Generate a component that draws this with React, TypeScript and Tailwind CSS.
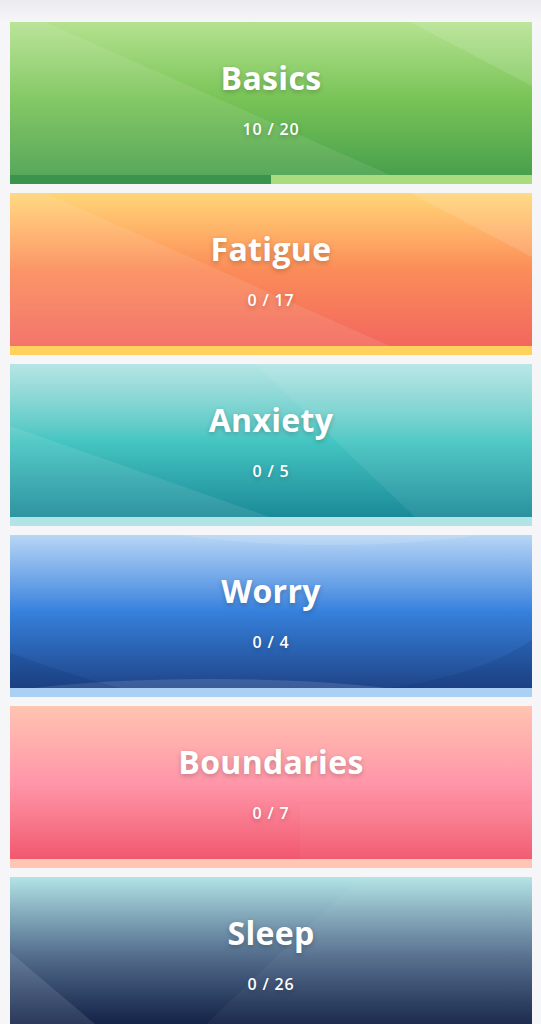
import React from 'react';

type Topic = {
  title: string;
  done: number;
  total: number;
  bg: string;
  track: string;
  fill: string;
  overlay: React.ReactNode;
};

const TOPICS: Topic[] = [
  {
    title: 'Basics',
    done: 10,
    total: 20,
    bg: 'bg-gradient-to-b from-[#b4e28f] via-[#79c457] to-[#48a04c]',
    track: 'bg-[#a9db7f]',
    fill: 'bg-[#3a944c]',
    overlay: (
      <>
        <polygon points="0,0 35,0 380,153 0,153" fill="#ffffff" fillOpacity="0.09" />
        <polygon points="400,0 522,0 522,64" fill="#ffffff" fillOpacity="0.12" />
      </>
    ),
  },
  {
    title: 'Fatigue',
    done: 0,
    total: 17,
    bg: 'bg-gradient-to-b from-[#ffd677] via-[#fb8c59] to-[#f2675e]',
    track: 'bg-[#ffd25f]',
    fill: 'bg-[#f2675e]',
    overlay: (
      <>
        <polygon points="0,0 35,0 380,153 0,153" fill="#ffffff" fillOpacity="0.09" />
        <polygon points="400,0 522,0 522,64" fill="#ffffff" fillOpacity="0.12" />
      </>
    ),
  },
  {
    title: 'Anxiety',
    done: 0,
    total: 5,
    bg: 'bg-gradient-to-b from-[#b5e5e5] via-[#45c6c2] to-[#1a8a98]',
    track: 'bg-[#b2e4e6]',
    fill: 'bg-[#1a8a98]',
    overlay: (
      <>
        <polygon points="0,62 260,153 0,153" fill="#ffffff" fillOpacity="0.09" />
        <polygon points="245,0 522,0 522,153 405,153" fill="#ffffff" fillOpacity="0.07" />
      </>
    ),
  },
  {
    title: 'Worry',
    done: 0,
    total: 4,
    bg: 'bg-gradient-to-b from-[#b8d6f5] via-[#3681dd] to-[#1f4589]',
    track: 'bg-[#acd0f3]',
    fill: 'bg-[#1f4589]',
    overlay: (
      <>
        <ellipse cx="320" cy="-32" rx="230" ry="42" fill="#ffffff" fillOpacity="0.12" />
        <ellipse cx="200" cy="178" rx="260" ry="34" fill="#ffffff" fillOpacity="0.13" />
        <path d="M0,118 Q60,140 110,153 L0,153 Z" fill="#0b2a66" fillOpacity="0.18" />
        <path d="M522,105 Q470,140 380,153 L522,153 Z" fill="#0b2a66" fillOpacity="0.15" />
      </>
    ),
  },
  {
    title: 'Boundaries',
    done: 0,
    total: 7,
    bg: 'bg-gradient-to-b from-[#ffc4b1] via-[#ff96a9] to-[#f1576f]',
    track: 'bg-[#ffc6b6]',
    fill: 'bg-[#f1576f]',
    overlay: <rect x="290" y="99" width="232" height="54" fill="#ffffff" fillOpacity="0.03" />,
  },
  {
    title: 'Sleep',
    done: 0,
    total: 26,
    bg: 'bg-gradient-to-b from-[#b2e4e6] via-[#56708f] to-[#101d42]',
    track: 'bg-[#b2e4e6]',
    fill: 'bg-[#101d42]',
    overlay: (
      <>
        <polygon points="350,0 522,0 522,153 190,153" fill="#ffffff" fillOpacity="0.04" />
        <polygon points="0,75 92,153 0,153" fill="#ffffff" fillOpacity="0.1" />
      </>
    ),
  },
];

function TopicCard({ topic }: { topic: Topic }) {
  const pct = (topic.done / topic.total) * 100;
  return (
    <div className="w-[522px]">
      <div className={`relative h-[153px] overflow-hidden ${topic.bg}`}>
        <svg className="absolute inset-0 w-full h-full" viewBox="0 0 522 153" preserveAspectRatio="none">
          {topic.overlay}
        </svg>
        <div className="relative flex flex-col items-center pt-[37px] text-white [text-shadow:0_2px_5px_rgba(0,0,0,0.22)]">
          <h2 className="text-[32px] leading-[38px] font-bold tracking-[0.01em] font-['Open_Sans',sans-serif]">
            {topic.title}
          </h2>
          <p className="mt-[22px] text-[16px] leading-[20px] font-semibold tracking-[0.05em] font-['Open_Sans',sans-serif]">
            {topic.done} / {topic.total}
          </p>
        </div>
      </div>
      <div className={`h-[9px] flex ${topic.track}`}>
        <div className={topic.fill} style={{ width: `${pct}%` }} />
      </div>
    </div>
  );
}

export default function App() {
  return (
    <div className="min-h-screen bg-[#f6f6f8]">
      <div className="h-[22px] bg-gradient-to-b from-[#ebebef] to-[#f6f6f8]" />
      <div className="flex flex-col gap-[9px] pl-[10px]">
        {TOPICS.map((t) => (
          <TopicCard key={t.title} topic={t} />
        ))}
      </div>
    </div>
  );
}
